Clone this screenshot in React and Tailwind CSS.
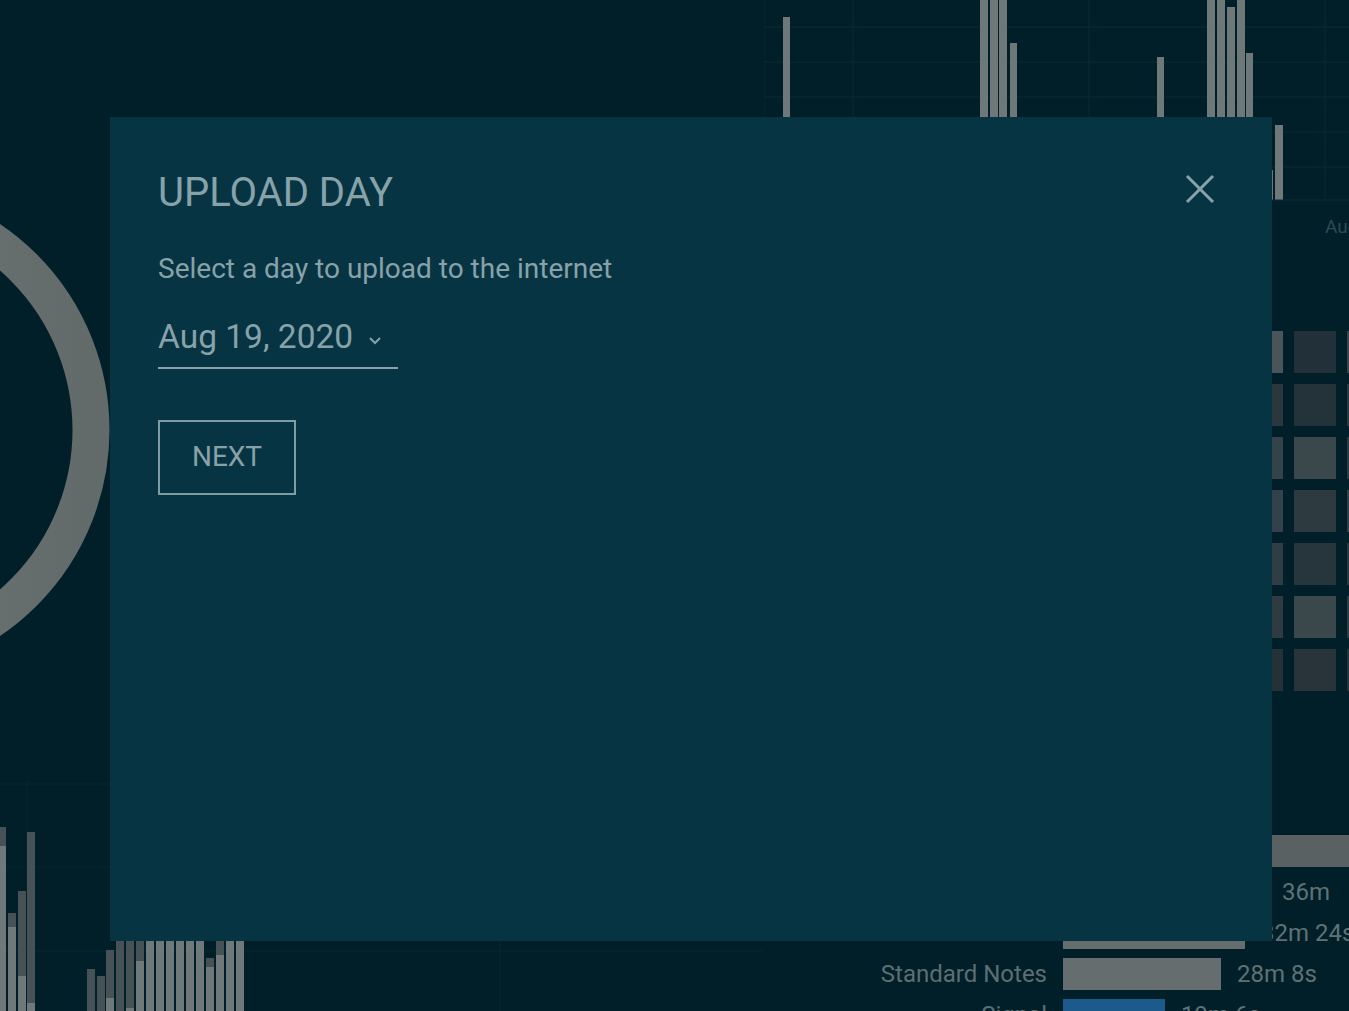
import React from "react";

const topBars = [
  { x: 19, w: 7, y: 17 },
  { x: 216, w: 8, y: 0 },
  { x: 226, w: 8, y: 0 },
  { x: 235, w: 8, y: 0 },
  { x: 246, w: 7, y: 43 },
  { x: 393, w: 7, y: 57 },
  { x: 443, w: 8, y: 0 },
  { x: 453, w: 8, y: 0 },
  { x: 463, w: 8, y: 7 },
  { x: 473, w: 8, y: 0 },
  { x: 482, w: 7, y: 53 },
  { x: 502, w: 7, y: 170 },
  { x: 511, w: 8, y: 125 },
];

// stacked bars: top of dark part, start of light part (page y)
const stackBars = [
  { x: 0, w: 6, dark: 827, light: 846 },
  { x: 8, w: 8, dark: 913, light: 927 },
  { x: 18, w: 8, dark: 891, light: 976 },
  { x: 27, w: 8, dark: 832, light: 1003 },
  { x: 87, w: 8, dark: 969, light: 1011 },
  { x: 97, w: 8, dark: 976, light: 1011 },
  { x: 106, w: 8, dark: 950, light: 998 },
  { x: 116, w: 8, dark: 930, light: 1011 },
  { x: 126, w: 8, dark: 930, light: 1008 },
  { x: 136, w: 8, dark: 930, light: 961 },
  { x: 146, w: 8, dark: 930, light: 930 },
  { x: 156, w: 8, dark: 930, light: 930 },
  { x: 166, w: 8, dark: 930, light: 930 },
  { x: 176, w: 8, dark: 930, light: 930 },
  { x: 186, w: 8, dark: 930, light: 930 },
  { x: 196, w: 8, dark: 930, light: 930 },
  { x: 206, w: 8, dark: 958, light: 967 },
  { x: 216, w: 8, dark: 930, light: 955 },
  { x: 226, w: 8, dark: 930, light: 930 },
  { x: 236, w: 8, dark: 930, light: 930 },
];

const heat = [
  ["#4a5557", "#22303a", "#3a4547"],
  ["#2a373d", "#24323a", "#2b383d"],
  ["#34434a", "#3a484c", "#2d3a3f"],
  ["#33424a", "#2d3b40", "#33404a"],
  ["#2f3d44", "#27353c", "#2a373d"],
  ["#2e3b41", "#3a484c", "#2e3b41"],
  ["#243238", "#283439", "#263339"],
];

const usage = [
  { name: "", width: 400, value: "", color: "bg-[#596163]" },
  { name: "", width: 203, value: "36m", color: "bg-[#656d6e]" },
  { name: "", width: 182, value: "32m 24s", color: "bg-[#656d6e]" },
  { name: "Standard Notes", width: 158, value: "28m 8s", color: "bg-[#656d6e]" },
  { name: "Signal", width: 102, value: "19m 6s", color: "bg-[#1b5a8a]" },
];

function TopChart() {
  return (
    <svg width="585" height="240" className="block">
      {[27, 62, 97, 132, 167].map((y) => (
        <line key={y} x1="0" x2="585" y1={y} y2={y} stroke="#0a2c35" strokeWidth="1" />
      ))}
      {[0, 89, 325, 561].map((x) => (
        <line key={x} x1={x} x2={x} y1="0" y2="200" stroke="#0a2c35" strokeWidth="1" />
      ))}
      {topBars.map((b, i) => (
        <rect key={i} x={b.x} y={b.y} width={b.w} height={200 - b.y} fill="#6e7878" />
      ))}
      <line x1="0" x2="585" y1="200" y2="200" stroke="#0b2d36" strokeWidth="1" />
      <text x="561" y="233" fill="#2f4a52" fontSize="19" fontFamily="Roboto, sans-serif">
        Aug 19
      </text>
    </svg>
  );
}

function Ring() {
  return (
    <svg width="130" height="700" className="block">
      <defs>
        <linearGradient id="ringGrad" x1="0" x2="1" y1="0" y2="0">
          <stop offset="0" stopColor="#767e7e" />
          <stop offset="1" stopColor="#626a6a" />
        </linearGradient>
      </defs>
      <circle cx="-139" cy="430" r="230" fill="none" stroke="url(#ringGrad)" strokeWidth="37" />
    </svg>
  );
}

function StackChart() {
  return (
    <svg width="764" height="231" className="block">
      {[4, 87, 171].map((y) => (
        <line key={y} x1="0" x2="764" y1={y} y2={y} stroke="#08262f" strokeWidth="1" />
      ))}
      {[27, 500].map((x) => (
        <line key={x} x1={x} x2={x} y1="0" y2="231" stroke="#08262f" strokeWidth="1" />
      ))}
      {stackBars.map((b, i) => (
        <g key={i}>
          <rect x={b.x} y={b.dark - 780} width={b.w} height={b.light - b.dark} fill="#465255" />
          <rect x={b.x} y={b.light - 780} width={b.w} height={1011 - b.light} fill="#6f7979" />
        </g>
      ))}
    </svg>
  );
}

function Dashboard() {
  return (
    <div className="flex h-[1011px] w-[1349px] overflow-hidden bg-[#011f28]">
      <div className="flex w-[764px] shrink-0 flex-col">
        <div className="h-[780px]">
          <Ring />
        </div>
        <StackChart />
      </div>
      <div className="w-[585px] shrink-0 overflow-hidden">
        <TopChart />
        <div className="mt-[91px] grid grid-cols-[42px_42px_42px] gap-[11px] pl-[477px]">
          {heat.flat().map((c, i) => (
            <div key={i} className="h-[42px] w-[42px]" style={{ backgroundColor: c }} />
          ))}
        </div>
        <div className="mt-[144px] flex flex-col gap-[9px]">
          {usage.map((u, i) => (
            <div key={i} className="flex h-[32px] items-center gap-[16px]">
              <div className="w-[283px] shrink-0 text-right text-[24px] text-[#5b6f73]">{u.name}</div>
              <div className={`h-[32px] shrink-0 ${u.color}`} style={{ width: u.width }} />
              <div className="whitespace-nowrap text-[24px] text-[#5e7276]">{u.value}</div>
            </div>
          ))}
        </div>
      </div>
    </div>
  );
}

export default function App() {
  return (
    <div className="relative h-[1011px] w-[1349px] overflow-hidden font-['Roboto',sans-serif]">
      <Dashboard />
      <div className="absolute inset-0 pl-[110px] pt-[117px]">
        <div className="h-[824px] w-[1162px] bg-[#073443] pl-[48px] pr-[56px] pt-[56px] text-[#87a2a8]">
          <div className="flex items-start justify-between">
            <h1 className="text-[40px] leading-none font-normal">UPLOAD DAY</h1>
            <button className="block">
              <svg width="32" height="32" viewBox="0 0 32 32" className="block">
                <path d="M3 3L29 29M29 3L3 29" stroke="#87a2a8" strokeWidth="3" />
              </svg>
            </button>
          </div>
          <p className="mt-[42px] text-[28px] leading-none">Select a day to upload to the internet</p>
          <div className="mt-[37px] inline-flex w-[240px] items-center border-b-2 border-[#87a2a8] pb-[13px]">
            <span className="text-[33.5px] leading-none">Aug 19, 2020</span>
            <svg width="14" height="10" viewBox="0 0 14 10" className="ml-[15px] mt-[8px] block">
              <path d="M2 2L7 7L12 2" fill="none" stroke="#87a2a8" strokeWidth="2" />
            </svg>
          </div>
          <div className="mt-[51px]">
            <button className="flex h-[75px] w-[138px] items-center justify-center border-2 border-[#7f9ca3] text-[28px] leading-none text-[#87a2a8]">
              NEXT
            </button>
          </div>
        </div>
      </div>
    </div>
  );
}
